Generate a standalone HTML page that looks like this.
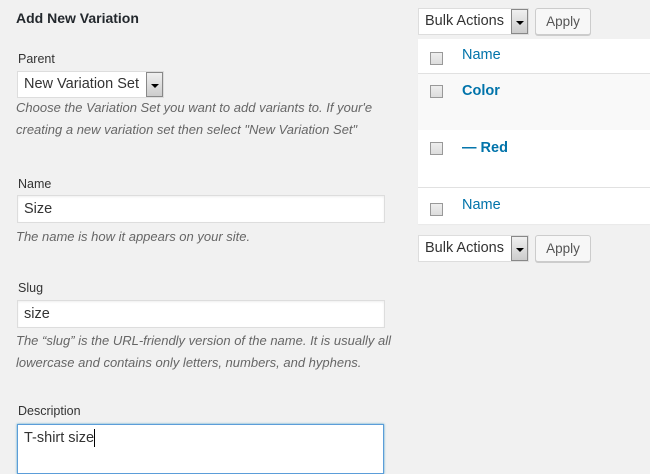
<!DOCTYPE html><html><head><style>
body{margin:0;width:650px;height:462px;background:#f1f1f1;font-family:"Liberation Sans",sans-serif;color:#444;position:relative;overflow:hidden}
.a{position:absolute;white-space:nowrap}
.h{font-size:14px;font-weight:bold;color:#23282d}
.l{font-size:12.5px;color:#333}
.i{font-size:13px;font-style:italic;color:#666;line-height:22px}
.inp{position:absolute;background:#fff;border:1px solid #ddd;box-sizing:border-box;font-size:14.5px;color:#333;padding-left:6px;box-shadow:inset 0 1px 2px rgba(0,0,0,.07)}
.sel{position:absolute;background:#fff;border:1px solid #ddd;box-sizing:border-box;font-size:14.5px;color:#333;padding-left:6px}
.arr{position:absolute;top:0;right:0;width:17px;height:100%;box-sizing:border-box;border:1px solid #888;background:linear-gradient(#f0f0f0,#ccc)}
.arr:after{content:"";position:absolute;left:4px;top:11px;border-left:4px solid transparent;border-right:4px solid transparent;border-top:4px solid #000}
.btn{position:absolute;border:1px solid #ccc;border-radius:3px;background:#f7f7f7;box-sizing:border-box;font-size:13.5px;color:#555;text-align:center;box-shadow:0 1px 0 #ccc}
.cb{position:absolute;left:12px;width:13px;height:13px;border:1px solid #999;background:linear-gradient(#eee,#ddd);box-sizing:border-box}
.lk{position:absolute;left:44px;font-size:14.5px;color:#0073aa}
</style></head><body>
<div class="a h" style="left:16px;top:10px">Add New Variation</div>
<div class="a l" style="left:18px;top:52px">Parent</div>
<div class="sel" style="left:17px;top:71px;width:147px;height:27px;line-height:25px">New Variation Set<div class="arr"></div></div>
<div class="a i" style="left:16px;top:97px">Choose the Variation Set you want to add variants to. If your'e<br>creating a new variation set then select "New Variation Set"</div>
<div class="a l" style="left:18px;top:177px">Name</div>
<div class="inp" style="left:17px;top:195px;width:368px;height:28px;line-height:26px">Size</div>
<div class="a i" style="left:16px;top:226px">The name is how it appears on your site.</div>
<div class="a l" style="left:18px;top:281px">Slug</div>
<div class="inp" style="left:17px;top:300px;width:368px;height:28px;line-height:26px">size</div>
<div class="a i" style="left:16px;top:330px">The “slug” is the URL-friendly version of the name. It is usually all<br>lowercase and contains only letters, numbers, and hyphens.</div>
<div class="a l" style="left:18px;top:404px">Description</div>
<div class="inp" style="left:17px;top:424px;width:367px;height:50px;line-height:26px;border-color:#5b9dd9;box-shadow:0 0 2px rgba(30,140,190,.8)">T-shirt size<span style="display:inline-block;width:1px;height:18px;background:#000;vertical-align:middle"></span></div>

<div class="sel" style="left:418px;top:8px;width:111px;height:27px;line-height:25px">Bulk Actions<div class="arr"></div></div>
<div class="btn" style="left:535px;top:8px;width:56px;height:27px;line-height:25px">Apply</div>
<div class="a" style="left:418px;top:39px;width:232px;height:185px;background:#fff;box-shadow:0 1px 1px rgba(0,0,0,.04)">
<div class="a" style="left:0;top:0;width:232px;height:34px;border-bottom:1px solid #e1e1e1"><div class="cb" style="top:13px"></div><div class="lk" style="top:8px">Name</div></div>
<div class="a" style="left:0;top:35px;width:232px;height:56px;background:#f9f9f9"><div class="cb" style="top:11px"></div><div class="lk" style="top:9px;font-weight:bold">Color</div></div>
<div class="a" style="left:0;top:91px;width:232px;height:57px;border-bottom:1px solid #e1e1e1"><div class="cb" style="top:12px"></div><div class="lk" style="top:10px;font-weight:bold">— Red</div></div>
<div class="a" style="left:0;top:149px;width:232px;height:36px"><div class="cb" style="top:15px"></div><div class="lk" style="top:9px">Name</div></div>
</div>
<div class="sel" style="left:418px;top:235px;width:111px;height:27px;line-height:25px">Bulk Actions<div class="arr"></div></div>
<div class="btn" style="left:535px;top:235px;width:56px;height:27px;line-height:25px">Apply</div>
</body></html>
